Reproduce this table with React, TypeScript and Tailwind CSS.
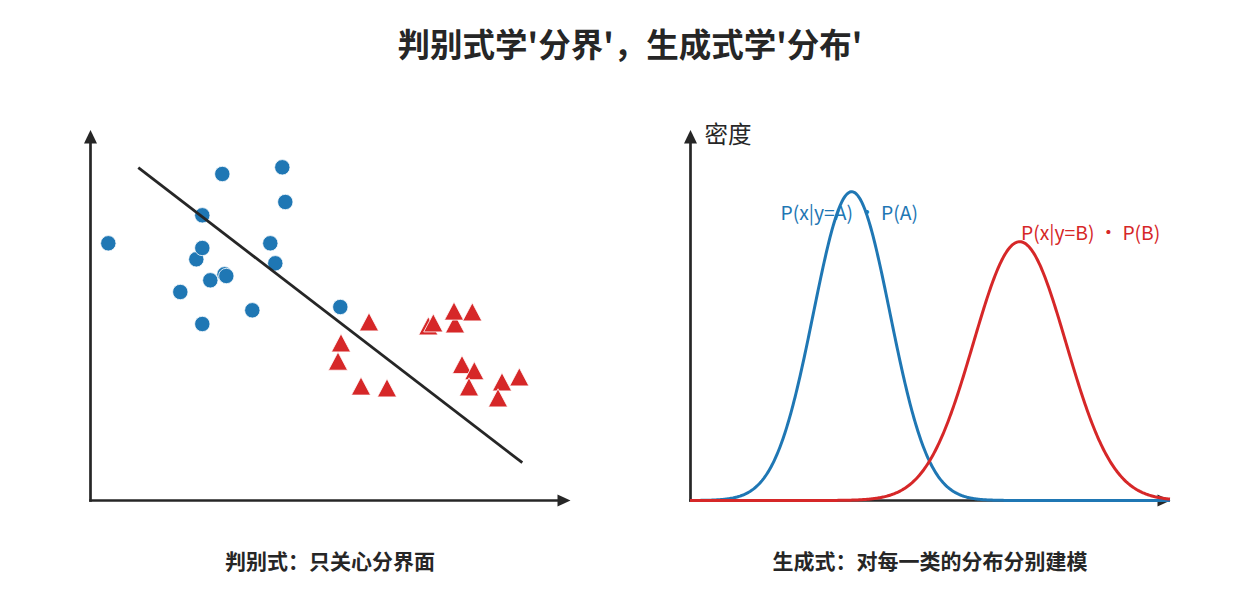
import React from "react";

type Pt = [number, number];

const AXIS = "#262626";
const BLUE = "#1f77b4";
const RED = "#d62728";

// scatter points in page coordinates (draw order matters for overlaps)
const blueDots: Pt[] = [
  [108.3, 243.3],
  [222.3, 174],
  [282.3, 167.3],
  [285.3, 202],
  [202.3, 215.3],
  [196.3, 259.3],
  [202.3, 248],
  [270.3, 243.3],
  [275.3, 263.3],
  [224.5, 274.3],
  [226.3, 276],
  [210.3, 280.3],
  [180.3, 292],
  [252.3, 310.3],
  [202.3, 324],
  [340.3, 307],
];

const redTris: Pt[] = [
  [369, 322],
  [341, 343],
  [338, 361.3],
  [361, 386.2],
  [387, 388],
  [428.3, 326],
  [433.3, 323],
  [455, 324],
  [454, 311.2],
  [472.3, 312],
  [462, 364.7],
  [474.3, 370.8],
  [469, 387],
  [502, 382],
  [519.3, 377],
  [498, 398],
];

const curvePath = (mu: number, sigma: number, h: number) => {
  const pts: string[] = [];
  for (let x = 690; x <= 1170; x += 1) {
    const y = 500.5 - h * Math.exp(-((x - mu) ** 2) / (2 * sigma * sigma));
    pts.push(`${x},${y.toFixed(2)}`);
  }
  return "M" + pts.join(" L");
};

const Axes = ({ x0 }: { x0: number }) => (
  <g>
    <line x1={x0} y1={501.8} x2={x0} y2={141} stroke={AXIS} strokeWidth={2.7} />
    <polygon points={`${x0},130 ${x0 - 6.5},143.5 ${x0 + 6.5},143.5`} fill={AXIS} />
    <line x1={x0 - 1.3} y1={500.5} x2={x0 + 468} y2={500.5} stroke={AXIS} strokeWidth={2.7} />
    <polygon
      points={`${x0 + 480},500.5 ${x0 + 467},494.5 ${x0 + 467},506.5`}
      fill={AXIS}
    />
  </g>
);

const DiscriminativeChart = () => (
  <svg width={600} height={410} viewBox="30 110 600 410">
    <Axes x0={90.5} />
    {blueDots.map(([x, y], i) => (
      <circle key={i} cx={x} cy={y} r={7.7} fill={BLUE} stroke="#fff" strokeWidth={0.8} />
    ))}
    {redTris.map(([x, y], i) => (
      <polygon
        key={i}
        points={`${x},${y - 9.2} ${x - 9.6},${y + 8.9} ${x + 9.6},${y + 8.9}`}
        fill={RED}
        stroke="#fff"
        strokeWidth={0.8}
      />
    ))}
    <line x1={138.3} y1={167.7} x2={522.3} y2={462.7} stroke={AXIS} strokeWidth={2.8} />
  </svg>
);

const GenerativeChart = () => (
  <svg width={600} height={410} viewBox="630 110 600 410">
    <Axes x0={690.5} />
    <text x={704.5} y={142.5} fontSize={23.5} fill={AXIS}>
      密度
    </text>
    <path d={curvePath(851.7, 38.3, 308.8)} fill="none" stroke={BLUE} strokeWidth={3} />
    <path d={curvePath(1019.7, 46.5, 258.8)} fill="none" stroke={RED} strokeWidth={3} />
    <text x={780.5} y={220} fontSize={19.3} fill={BLUE}>
      P(x|y=A) · P(A)
    </text>
    <text x={1021} y={239.5} fontSize={19.3} fill={RED}>
      P(x|y=B) · P(B)
    </text>
  </svg>
);

const App: React.FC = () => {
  return (
    <div className="w-[1250px] h-[600px] bg-white flex flex-col font-['Noto_Sans_CJK_SC',sans-serif] text-[#262626]">
      <h1 className="pt-[23px] pl-[10px] leading-[40px] text-[32.5px] font-bold text-center">
        判别式学'分界'，生成式学'分布'
      </h1>
      <div className="flex pl-[30px] mt-[47px]">
        <div className="w-[600px] flex flex-col items-center">
          <DiscriminativeChart />
          <p className="mt-[25px] leading-[30px] text-[21px] font-bold">判别式：只关心分界面</p>
        </div>
        <div className="w-[600px] flex flex-col items-center">
          <GenerativeChart />
          <p className="mt-[25px] leading-[30px] text-[21px] font-bold">
            生成式：对每一类的分布分别建模
          </p>
        </div>
      </div>
    </div>
  );
};

export default App;
